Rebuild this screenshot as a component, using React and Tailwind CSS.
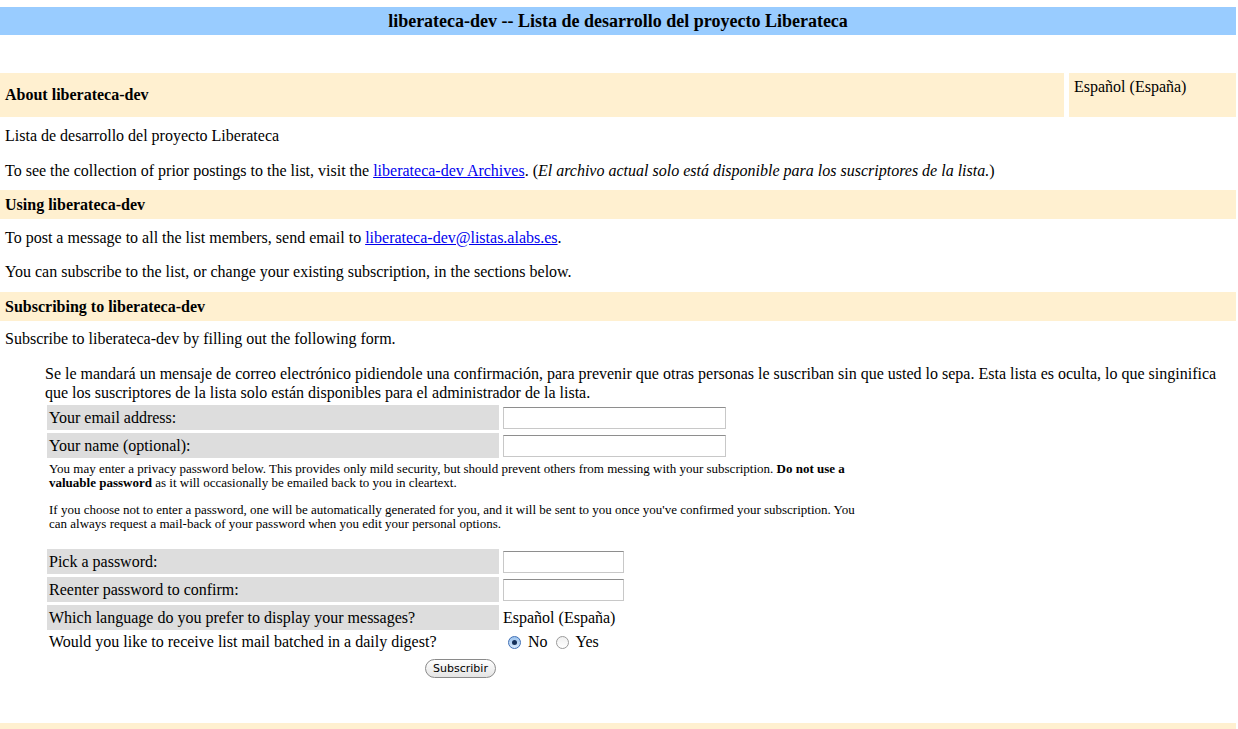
import React from 'react';

const serif = { fontFamily: '"Liberation Serif", "Times New Roman", serif' };

const Section = ({ children }) => (
  <div className="h-[29px] bg-[#fff0d0] flex items-center pl-[5px] font-bold">{children}</div>
);

const Row = ({ label, children, grey = true }) => (
  <div className="flex gap-[2px]">
    <div className={`w-[452px] h-[25px] flex items-center pl-[2px] ${grey ? 'bg-[#dddddd]' : ''}`}>{label}</div>
    <div className="flex items-center h-[25px] pl-[2px]">{children}</div>
  </div>
);

const Input = ({ w }) => (
  <div className={`${w} h-[22px] bg-white border border-[#c8c8c8] border-t-[#8e8e8e]`} />
);

// mac style radio
const Radio = ({ checked }) =>
  checked ? (
    <div className="w-[13px] h-[13px] rounded-full border border-[#3f6fb5] bg-gradient-to-b from-[#9cc3ee] to-[#d8e9fb] flex items-center justify-center">
      <div className="w-[5px] h-[5px] rounded-full bg-[#15305a]" />
    </div>
  ) : (
    <div className="w-[13px] h-[13px] rounded-full border border-[#9a9a9a] bg-gradient-to-b from-[#f0f0f0] to-white" />
  );

export default function App() {
  return (
    <div style={serif} className="w-[1238px] h-[729px] overflow-hidden bg-white text-black text-[16px] leading-[18px] pr-[2px]">
      <div className="h-[7px]" />
      <div className="h-[28px] bg-[#99ccff] flex items-center justify-center font-bold text-[18px]">
        liberateca-dev -- Lista de desarrollo del proyecto Liberateca
      </div>
      <div className="h-[38px]" />

      {/* About */}
      <div className="flex gap-[5px] h-[44px]">
        <div className="flex-1 bg-[#fff0d0] flex items-center pl-[5px] font-bold">About liberateca-dev</div>
        <div className="w-[167px] bg-[#fff0d0] pt-[5px] pl-[5px]">Español (España)</div>
      </div>

      <div className="pl-[5px] mt-[10px]">Lista de desarrollo del proyecto Liberateca</div>
      <div className="pl-[5px] mt-[17px]">
        To see the collection of prior postings to the list, visit the{' '}
        <a href="#" className="text-[#0000ee] underline">liberateca-dev Archives</a>. (
        <i>El archivo actual solo está disponible para los suscriptores de la lista.</i>)
      </div>

      <div className="mt-[10px]">
        <Section>Using liberateca-dev</Section>
      </div>
      <div className="pl-[5px] mt-[10px]">
        To post a message to all the list members, send email to{' '}
        <a href="#" className="text-[#0000ee] underline">liberateca-dev@listas.alabs.es</a>.
      </div>
      <div className="pl-[5px] mt-[16px]">
        You can subscribe to the list, or change your existing subscription, in the sections below.
      </div>

      <div className="mt-[11px]">
        <Section>Subscribing to liberateca-dev</Section>
      </div>
      <div className="pl-[5px] mt-[9px]">Subscribe to liberateca-dev by filling out the following form.</div>

      <div className="pl-[45px] mt-[16px] leading-[19px]">
        Se le mandará un mensaje de correo electrónico pidiendole una confirmación, para prevenir que otras personas le
        suscriban sin que usted lo sepa. Esta lista es oculta, lo que singinifica que los suscriptores de la lista solo
        están disponibles para el administrador de la lista.
      </div>

      <div className="pl-[47px] mt-[3px] flex flex-col gap-[3px]">
        <Row label="Your email address:"><Input w="w-[223px]" /></Row>
        <Row label="Your name (optional):"><Input w="w-[223px]" /></Row>
      </div>

      <div className="pl-[49px] mt-[4px] w-[870px] text-[13px] leading-[14px]">
        <p>
          You may enter a privacy password below. This provides only mild security, but should prevent others from
          messing with your subscription. <b>Do not use a valuable password</b> as it will occasionally be emailed back
          to you in cleartext.
        </p>
        <p className="mt-[13px]">
          If you choose not to enter a password, one will be automatically generated for you, and it will be sent to
          you once you've confirmed your subscription. You can always request a mail-back of your password when you
          edit your personal options.
        </p>
      </div>

      <div className="pl-[47px] mt-[18px] flex flex-col gap-[3px]">
        <Row label="Pick a password:"><Input w="w-[121px]" /></Row>
        <Row label="Reenter password to confirm:"><Input w="w-[121px]" /></Row>
        <Row label="Which language do you prefer to display your messages?">Español (España)</Row>
        <div className="flex gap-[2px] h-[18px]">
          <div className="w-[452px] pl-[2px] flex items-center">
            Would you like to receive list mail batched in a daily digest?
          </div>
          <div className="flex items-center pl-[7px]">
            <Radio checked />
            <span className="ml-[7px]">No</span>
            <div className="ml-[8px]">
              <Radio />
            </div>
            <span className="ml-[7px]">Yes</span>
          </div>
        </div>
      </div>

      <div className="flex mt-[8px] pl-[425px]">
        <button
          className="h-[19px] w-[71px] rounded-full border border-[#8a8a8a] bg-gradient-to-b from-white to-[#e4e4e4] text-[11px] leading-none"
          style={{ fontFamily: '"DejaVu Sans", "Liberation Sans", sans-serif' }}
        >
          Subscribir
        </button>
      </div>

      <div className="mt-[45px] h-[10px] bg-[#fff0d0]" />
    </div>
  );
}
